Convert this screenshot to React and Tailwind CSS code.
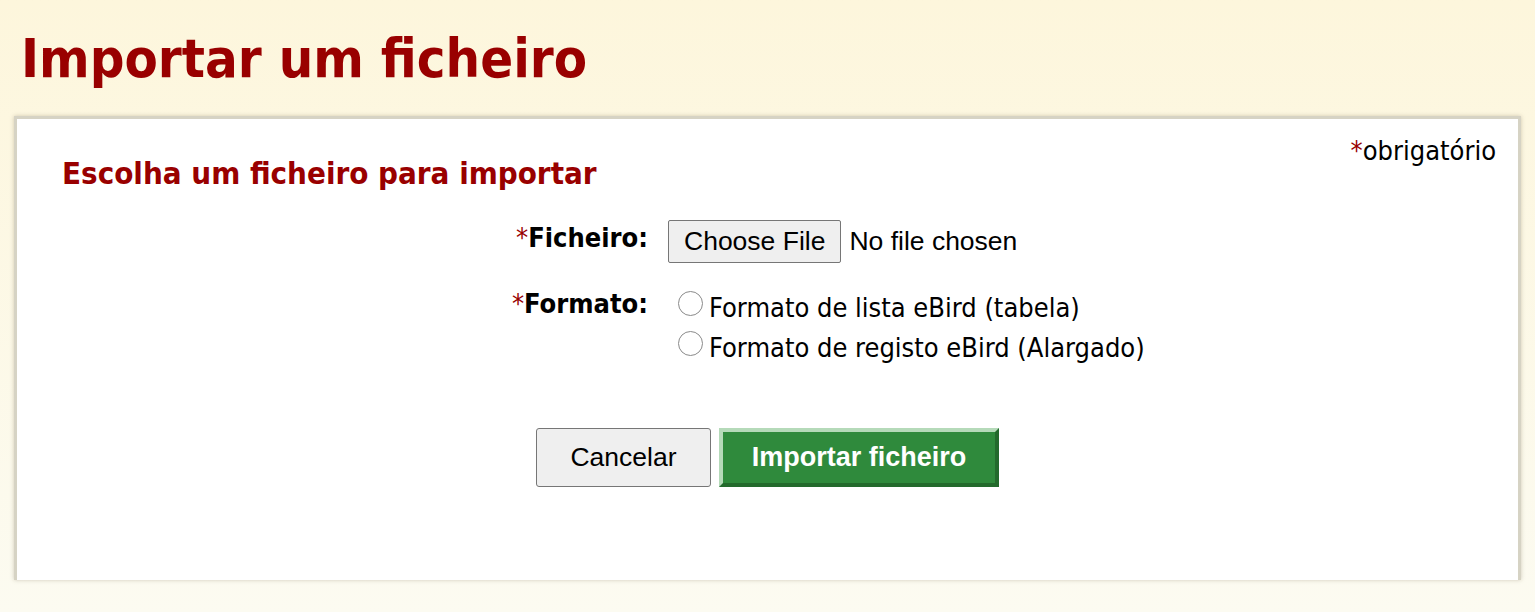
import React from 'react';

const Req = () => <span className="text-[#990000] font-normal">*</span>;

const Radio = ({ label }) => (
  <label className="flex items-center h-[40px]">
    <span className="w-[25px] h-[25px] rounded-full border border-[#8a8a8a] bg-white mr-[6px] ml-[10px]" />
    <span className="text-[27px] leading-[32px] text-black mt-[10px]">{label}</span>
  </label>
);

const App = () => {
  return (
    <div className="h-[612px] overflow-hidden bg-gradient-to-b from-[#fdf6dc] to-[#fcfbf1] font-['DejaVu_Sans_Condensed','DejaVu_Sans',sans-serif]">
      <h1 className="pl-[21px] pt-[28px] h-[116px] text-[54px] leading-[62px] font-bold text-[#990000]">
        Importar um ficheiro
      </h1>
      <div className="mx-[14px] h-[464px] bg-white border-l-[3px] border-t-[3px] border-r-[3px] border-[#d6d3c4] shadow-[0_0_4px_rgba(120,110,80,0.35)] relative">
        <div className="absolute right-[22px] top-[16px] text-[27px] leading-[32px] text-black">
          <Req />obrigatório
        </div>
        <h2 className="pl-[45px] pt-[36px] text-[31px] leading-[36px] font-bold text-[#990000]">
          Escolha um ficheiro para importar
        </h2>
        <div className="grid grid-cols-[631px_1fr] gap-x-[20px] mt-[29px]">
          <div className="text-right text-[27px] leading-[34px] font-bold pt-[1px]"><Req />Ficheiro:</div>
          <div className="flex items-center font-['Liberation_Sans',sans-serif] text-[26.5px]">
            <span className="h-[43px] px-[15px] flex items-center bg-[#efefef] border border-[#767676] rounded-[2px]">Choose File</span>
            <span className="ml-[8px]">No file chosen</span>
          </div>
          <div className="text-right text-[27px] leading-[34px] font-bold pt-[24px]"><Req />Formato:</div>
          <div className="pt-[20px]">
            <Radio label="Formato de lista eBird (tabela)" />
            <Radio label="Formato de registo eBird (Alargado)" />
          </div>
        </div>
        <div className="flex justify-center gap-[8px] mt-[65px] font-['Liberation_Sans',sans-serif]">
          <button className="w-[175px] h-[59px] bg-[#efefef] border border-[#767676] rounded-[3px] text-[26.5px] text-black">
            Cancelar
          </button>
          <button className="w-[280px] h-[59px] bg-[#2f8a3c] border-[4px] border-t-[#b5dab9] border-l-[#b5dab9] border-r-[#236a2c] border-b-[#236a2c] text-[27px] font-bold text-white">
            Importar ficheiro
          </button>
        </div>
      </div>
    </div>
  );
};

export default App;
